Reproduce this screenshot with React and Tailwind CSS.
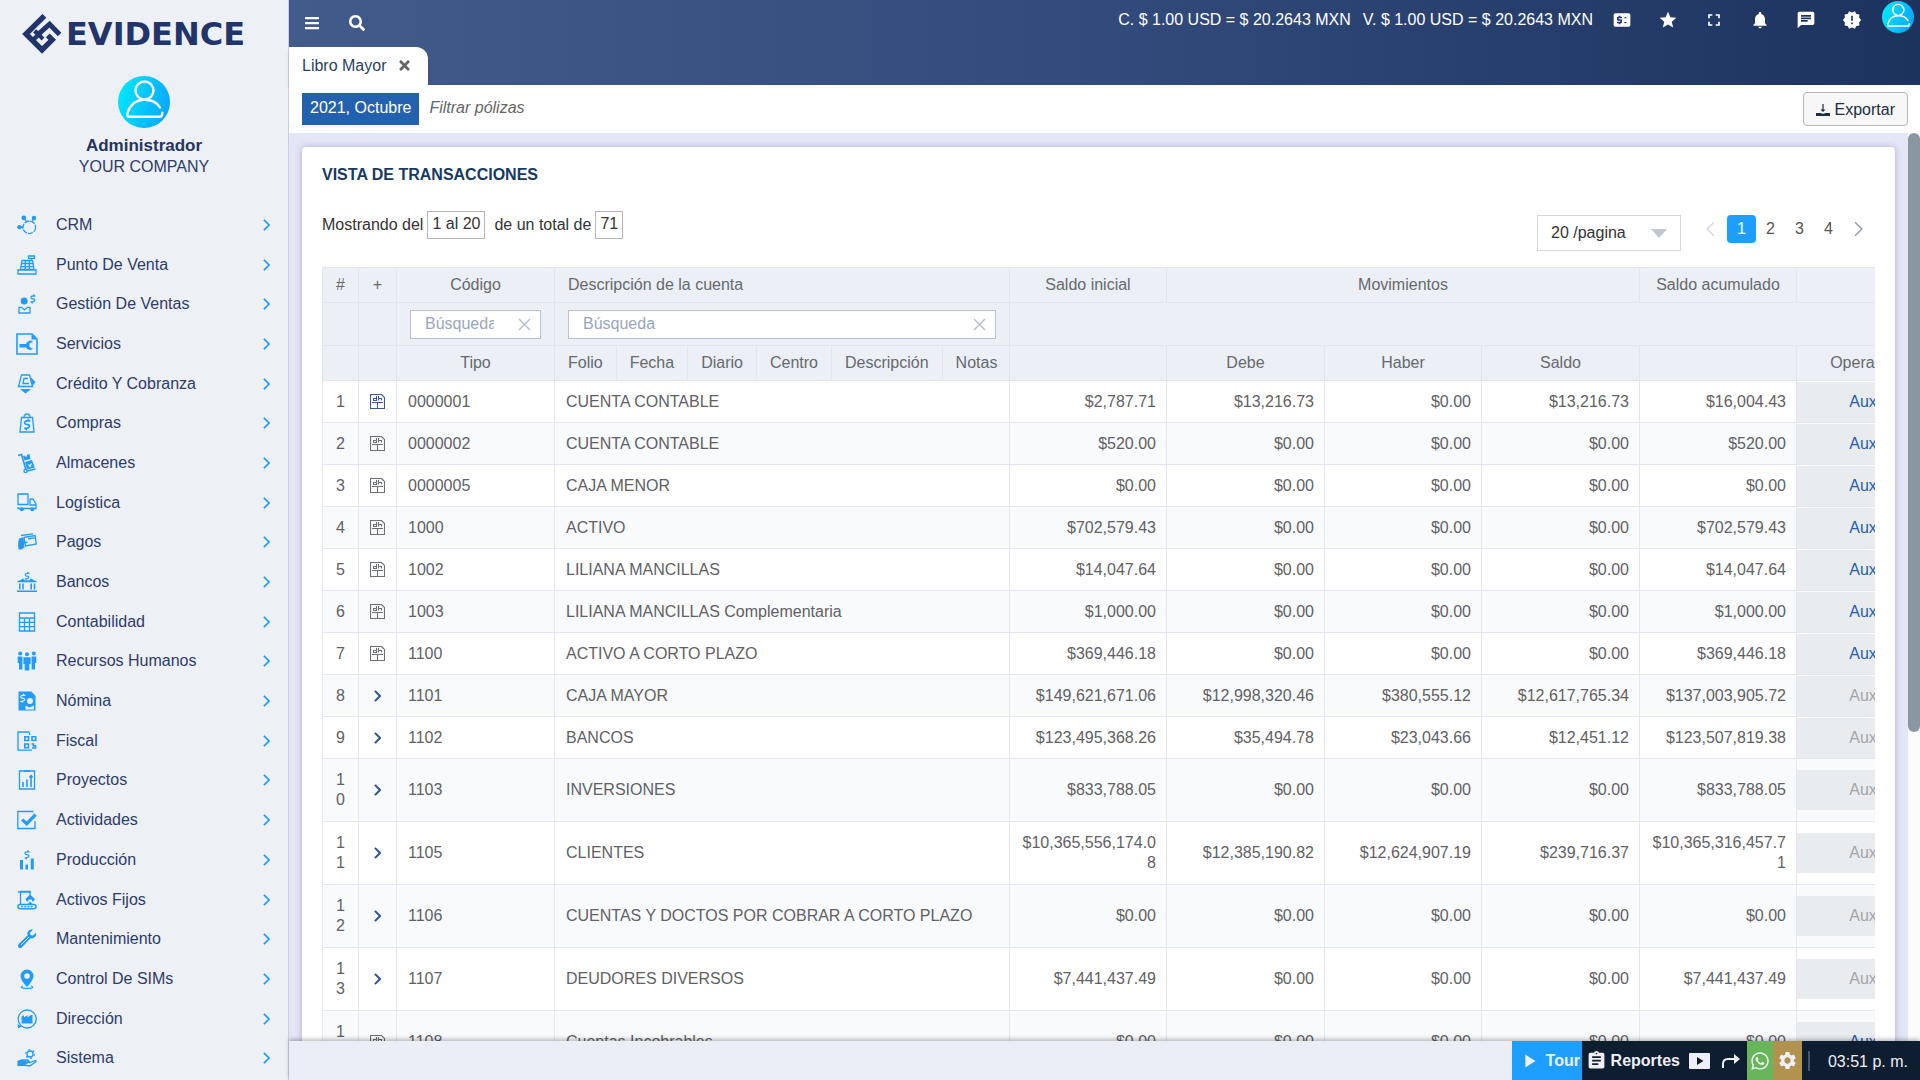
import React from "react";
import { FaBars, FaSearch, FaTimes, FaWhatsapp } from "react-icons/fa";
import {
  MdAssignment,
  MdChat,
  MdFullscreen,
  MdNewReleases,
  MdNotifications,
  MdPlayArrow,
  MdPriceChange,
  MdSettings,
  MdStar,
} from "react-icons/md";

const S = { fill: "none", stroke: "currentColor", strokeWidth: 1.3 };

const DOLLAR = "M3 -2H0.5Q-2 -2 -1.5 0Q-1 1 1 1Q3 1.5 2 3Q1.5 4 -1 4H-2M1.5 -3.5L1 -2M0 4L-0.5 5.5";

const menu = [
  {
    label: "CRM",
    icon: (
      <>
        <circle cx="12.3" cy="12.3" r="6.3" {...S} strokeDasharray="5 1" />
        <circle cx="6.8" cy="2.8" r="2.4" />
        <circle cx="17" cy="3" r="2.2" />
        <circle cx="2.4" cy="12.2" r="2.1" />
        <path d="M7 3L9.5 7M17 3L15 7M2 12H6" {...S} />
      </>
    ),
  },
  {
    label: "Punto De Venta",
    icon: (
      <>
        <path d="M11.5 1H17.5V3.3H11.5ZM14.5 3.5V5M5 5.5H15.5L17 14.5H3.5ZM1 15H19V19H1Z" {...S} />
        <path d="M4 8.5H16.5M3.8 11.7H17M8.3 5V15M12.3 5V15" {...S} />
      </>
    ),
  },
  {
    label: "Gestión De Ventas",
    icon: (
      <>
        <circle cx="7.2" cy="7" r="3.5" />
        <path d="M2 19V13.3H4.5L7.5 16L10.5 13.3H13V19Z" {...S} />
        <path d={DOLLAR} transform="translate(15.5 4)" {...S} />
      </>
    ),
  },
  {
    label: "Servicios",
    icon: (
      <>
        <path d="M0 0H15L20 5V20H0Z" {...S} strokeWidth="1.6" />
        <path d="M14.5 0V5.5H20Z" />
        <path d="M2.5 10H9A4.5 4.5 0 0 1 16 7.5L12.5 9.5V13L16 14.8A4.5 4.5 0 0 1 9 13.5H2.5Z" />
      </>
    ),
  },
  {
    label: "Crédito Y Cobranza",
    icon: (
      <>
        <path d="M4.5 1H12.5L15.5 12.5H1.5Z" {...S} />
        <path d="M11 4.5H7L6 9.5H12" {...S} />
        <path d="M13.5 3L18.5 8L15.5 12ZM3 15H14L8.5 19.5Z" />
      </>
    ),
  },
  {
    label: "Compras",
    icon: (
      <>
        <path d="M4.5 4.5H15.5L17 19H3ZM7 4.5Q7 1 10 1Q13 1 13 4.5" {...S} />
        <path d={DOLLAR} transform="translate(9.6 10.4) scale(1.25)" {...S} />
      </>
    ),
  },
  {
    label: "Almacenes",
    icon: (
      <>
        <path d="M1 2.5L4.5 1.5L9 17M10 18L18.5 16" {...S} strokeWidth="1.6" />
        <circle cx="8.5" cy="18" r="1.6" {...S} />
        <path d="M6 3L8 2.5L9 4.5L10.5 1.5L12.5 1L13.5 6L7.5 7.5ZM8 9L15 7L17.8 14.5L10 16.5Z" />
        <path d="M11.5 11.5L13 13.5L14.5 10.5" fill="none" stroke="#edf0f5" strokeWidth="1.3" />
      </>
    ),
  },
  {
    label: "Logística",
    icon: (
      <>
        <path d="M1 1H11V11.5H1ZM13 6H16L19 11V15.5H1V14M13 6V12H19" {...S} />
        <circle cx="4.8" cy="16.3" r="2" />
        <circle cx="15.3" cy="16.3" r="2" />
      </>
    ),
  },
  {
    label: "Pagos",
    icon: (
      <>
        <path d="M7 5.5L18 3.5L19.3 12L8.5 14ZM4 3.5L16 1.8M11 7L17.5 5.8" {...S} />
        <path d="M2 7Q3 5 6.5 5.5L7 10L10.5 9.5V11L7 11.5L7.5 15.5Q5 17 4.5 17.5H1.5Q0.5 11 2 7Z" />
      </>
    ),
  },
  {
    label: "Bancos",
    icon: (
      <>
        <path d="M0 19.2H20M0.5 9.5H19.5" {...S} strokeWidth="1.6" />
        <path d="M1 9.5L6 6.5L8 8.5H12L14 6.5L19 9.5Z" />
        <path d="M2.8 11.5V17.5M6 11.5V17.5M14.2 11.5V17.5M17.5 11.5V17.5" {...S} strokeWidth="1.6" />
        <path d={DOLLAR} transform="translate(9.7 3.2) scale(0.9)" {...S} />
      </>
    ),
  },
  {
    label: "Contabilidad",
    icon: <path d="M2.5 1H17.5V19H2.5ZM2.5 6H17.5M2.5 10.3H17.5M2.5 14.6H17.5M7.5 6V19M12.5 6V19" {...S} />,
  },
  {
    label: "Recursos Humanos",
    icon: (
      <>
        <circle cx="3.2" cy="2.6" r="2" />
        <circle cx="10" cy="3.3" r="2" />
        <circle cx="16.8" cy="2.6" r="2" />
        <path d="M0.7 5.5H5.4V18.5H2V12H0.7ZM14.6 5.5H19.3V12H18V18.5H14.6ZM6.4 6.2H13.6V13H12.3V19.5H7.7V13H6.4Z" />
      </>
    ),
  },
  {
    label: "Nómina",
    icon: (
      <>
        <path d="M1.5 0.5H14.5L18.5 5V19.5H1.5Z" />
        <circle cx="13" cy="10" r="3" fill="#edf0f5" />
        <path d="M8.5 18.5V14.5L12.5 16.5L17 14.5V18.5Z" fill="#edf0f5" />
        <path d={DOLLAR} transform="translate(5.3 6.3)" fill="none" stroke="#edf0f5" strokeWidth="1.2" />
      </>
    ),
  },
  {
    label: "Fiscal",
    icon: (
      <>
        <path d="M12.5 1.5V4M12.5 1H1V19.2H15" {...S} />
        <path d="M7.8 5.8H11.5V9.5H7.8ZM15 5.8H18.7V9.5H15ZM7.8 13H11.5V16.7H7.8ZM14.5 13H16.5V15H19M15 17H18.5V14" {...S} strokeWidth="1.6" />
      </>
    ),
  },
  {
    label: "Proyectos",
    icon: (
      <>
        <path d="M2.5 1H17.5V19H2.5Z" {...S} />
        <path d="M7 1H13M6 17V12M10 17V9.5M14 17V6M12.5 7.5L14 5.5L15.5 7.5" {...S} strokeWidth="1.6" />
      </>
    ),
  },
  {
    label: "Actividades",
    icon: (
      <>
        <path d="M16.5 1.5H0.8V18.5H18V11" {...S} />
        <path d="M4 10.5L6.5 8.5L9.5 11.5L17.5 3.5L19.8 5.8L9.8 16Z" />
      </>
    ),
  },
  {
    label: "Producción",
    icon: (
      <>
        <path d="M3 10H6V19.5H3ZM8.5 14.5H11V19.5H8.5ZM13.8 8.5H16.8V19.5H13.8Z" />
        <path d={DOLLAR} transform="translate(9.6 3.8)" {...S} />
      </>
    ),
  },
  {
    label: "Activos Fijos",
    icon: (
      <>
        <path d="M3.5 14V1.5H13V5M1 2H14" {...S} />
        <path d="M13 4.5L18 9L16 12L14.5 9.5H12L10 12L8.5 9Z" />
        <rect x="1" y="14.5" width="18" height="4.2" rx="2.1" {...S} strokeWidth="1.6" />
        <path d="M4 16.6H16.5" {...S} strokeDasharray="2 1.2" />
        <path d="M11 14L13 11.5L15.5 14Z" />
      </>
    ),
  },
  {
    label: "Mantenimiento",
    icon: (
      <>
        <path d="M19 3.5L16 6.5L13.5 6L13 3.8L16 0.8Q12.5 0 10.8 2.8Q10 4.5 10.5 6.5L1.5 15.3Q0.2 17 1.6 18.5Q3.2 19.8 4.8 18.5L13.5 9.3Q16 9.8 18 8Q19.8 6 19 3.5Z" />
        <path d="M4 16L12 8" fill="none" stroke="#edf0f5" strokeWidth="0.9" />
      </>
    ),
  },
  {
    label: "Control De SIMs",
    icon: (
      <>
        <path d="M10 0.5A6.5 6.5 0 0 1 16.5 7Q16.5 11 10 18Q3.5 11 3.5 7A6.5 6.5 0 0 1 10 0.5ZM10 4.2A2.8 2.8 0 1 0 10 9.8A2.8 2.8 0 1 0 10 4.2Z" fillRule="evenodd" />
        <path d="M6 17Q3.5 18 5 18.8Q10 20 15 18.8Q16.5 18 14 17" {...S} />
      </>
    ),
  },
  {
    label: "Dirección",
    icon: (
      <>
        <circle cx="10.2" cy="10" r="9" {...S} />
        <path d="M4.5 14.5V7.5L7 6V8.5L10.5 6V8.5L14 6H15.5V14.5Z" />
        <path d="M0.5 15L4.5 17.5L1 19.5Z" />
      </>
    ),
  },
  {
    label: "Sistema",
    icon: (
      <>
        <circle cx="13" cy="6" r="3" {...S} />
        <circle cx="13" cy="6" r="4.3" {...S} strokeDasharray="1.8 2.7" />
        <path d="M0.5 13.5L5 12H10.5L12.5 13.8H8M12 15L18.5 12.5Q19.8 13 18 14.5L12.5 18L6 17L0.5 17.5" {...S} />
        <path d="M0.5 13L6 12L12 14.5L8 17L0.5 17.5Z" />
      </>
    ),
  },
];

const rows = [
  ["0000001", "CUENTA CONTABLE", "$2,787.71", "$13,216.73", "$0.00", "$13,216.73", "$16,004.43", true],
  ["0000002", "CUENTA CONTABLE", "$520.00", "$0.00", "$0.00", "$0.00", "$520.00", true],
  ["0000005", "CAJA MENOR", "$0.00", "$0.00", "$0.00", "$0.00", "$0.00", true],
  ["1000", "ACTIVO", "$702,579.43", "$0.00", "$0.00", "$0.00", "$702,579.43", true],
  ["1002", "LILIANA MANCILLAS", "$14,047.64", "$0.00", "$0.00", "$0.00", "$14,047.64", true],
  ["1003", "LILIANA MANCILLAS Complementaria", "$1,000.00", "$0.00", "$0.00", "$0.00", "$1,000.00", true],
  ["1100", "ACTIVO A CORTO PLAZO", "$369,446.18", "$0.00", "$0.00", "$0.00", "$369,446.18", true],
  ["1101", "CAJA MAYOR", "$149,621,671.06", "$12,998,320.46", "$380,555.12", "$12,617,765.34", "$137,003,905.72", false],
  ["1102", "BANCOS", "$123,495,368.26", "$35,494.78", "$23,043.66", "$12,451.12", "$123,507,819.38", false],
  ["1103", "INVERSIONES", "$833,788.05", "$0.00", "$0.00", "$0.00", "$833,788.05", false],
  ["1105", "CLIENTES", "$10,365,556,174.08", "$12,385,190.82", "$12,624,907.19", "$239,716.37", "$10,365,316,457.71", false],
  ["1106", "CUENTAS Y DOCTOS POR COBRAR A CORTO PLAZO", "$0.00", "$0.00", "$0.00", "$0.00", "$0.00", false],
  ["1107", "DEUDORES DIVERSOS", "$7,441,437.49", "$0.00", "$0.00", "$0.00", "$7,441,437.49", false],
  ["1108", "Cuentas Incobrables", "$0.00", "$0.00", "$0.00", "$0.00", "$0.00", true],
];

const subHeaders = ["Folio", "Fecha", "Diario", "Centro", "Descripción", "Notas"];

const topActions = [
  { label: "Tipo de cambio", Icon: MdPriceChange },
  { label: "Favoritos", Icon: MdStar },
  { label: "Pantalla completa", Icon: MdFullscreen },
  { label: "Notificaciones", Icon: MdNotifications },
  { label: "Mensajes", Icon: MdChat },
  { label: "Novedades", Icon: MdNewReleases },
];

function Avatar({ className }) {
  return (
    <svg viewBox="0 0 52 52" className={className} aria-hidden="true">
      <defs>
        <linearGradient id="avatarFill" x1="0" x2="1" y1="0.3" y2="0.6">
          <stop offset="0" stopColor="#00e8fb" />
          <stop offset="1" stopColor="#0aa6ff" />
        </linearGradient>
      </defs>
      <circle cx="26" cy="26" r="26" fill="url(#avatarFill)" />
      <g fill="none" stroke="#fff" strokeWidth="2.4" strokeLinecap="round">
        <circle cx="26.5" cy="14.5" r="9" />
        <path d="M42 31.5C39 26.5 33 23.8 26.5 23.8C17.5 23.8 11 29.5 9.3 38.5Q9 40.8 11.3 40.8H41.5Q44.5 40.8 44.2 36.8" />
      </g>
    </svg>
  );
}

function LogoMark() {
  return (
    <svg viewBox="0 0 40 40" className="h-10 w-10 shrink-0" aria-hidden="true">
      <g fill="none" stroke="#22356b" strokeWidth="5.4">
        <path d="M22.4 1.8L4 20L20 36L30.2 25.8L25.8 21.4" />
        <path d="M10.5 26.5L16.6 20.6L12.6 16.8" strokeWidth="4.4" />
        <path d="M17 19.6L27.6 10.2L37.6 20.4" strokeWidth="5" />
        <path d="M16.4 20.4L21 25" strokeWidth="4" />
      </g>
    </svg>
  );
}

function LedgerIcon() {
  return (
    <svg viewBox="0 0 15 15" className="mx-auto h-[15px] w-[15px]" aria-hidden="true">
      <g fill="none" stroke="currentColor" strokeWidth="1.1">
        <path d="M0.5 0.5H11.5L14.5 3.5V14.5H0.5ZM2 8.5H13M7.5 8.5V14" />
        <path d="M6.5 2V6.5H3.5V4.5H6.5M8.5 2V6.5M8.5 4.5H11.5V6.5" />
      </g>
    </svg>
  );
}

function Chevron({ className, width = 2, left = false }) {
  return (
    <svg viewBox="0 0 8 14" className={className} aria-hidden="true">
      <path d={left ? "M7 1L1 7L7 13" : "M1 1L7 7L1 13"} fill="none" stroke="currentColor" strokeWidth={width} />
    </svg>
  );
}

function Sidebar() {
  return (
    <aside className="flex w-[289px] shrink-0 flex-col border-r border-[#c9cfe0] bg-[#edf0f5] text-[#2d3c6b]">
      <div className="flex items-center gap-1 pt-[14px] pl-[22px]">
        <LogoMark />
        <span className="text-[32px] leading-10 font-bold text-[#22356b] font-['DejaVu_Sans',sans-serif]">EVIDENCE</span>
      </div>
      <div className="flex flex-col items-center pt-[22px]">
        <Avatar className="h-[52px] w-[52px]" />
        <strong className="mt-[7px] text-[17px] leading-[22px] text-[#24345f]">Administrador</strong>
        <span className="leading-5">YOUR COMPANY</span>
      </div>
      <nav className="mt-[28px] flex min-h-0 flex-1 flex-col pb-[2px]">
        {menu.map((item) => (
          <a key={item.label} href="#" className="flex flex-1 items-center pr-[18px] pl-[17px]">
            <svg viewBox="0 0 20 20" className="h-5 w-5 overflow-visible text-[#229bfb]" fill="currentColor" aria-hidden="true">
              {item.icon}
            </svg>
            <span className="ml-[19px] flex-1">{item.label}</span>
            <Chevron className="h-3 w-[7px] text-[#229bfb]" />
          </a>
        ))}
      </nav>
    </aside>
  );
}

function TopBar() {
  return (
    <header className="flex h-[85px] shrink-0 flex-col justify-between bg-gradient-to-r from-[#435b8b] via-[#324b7c] to-[#1d335e] text-white">
      <div className="flex h-[38px] items-center pl-[15px]">
        <button aria-label="Menú" className="pt-2">
          <FaBars size={16} />
        </button>
        <button aria-label="Buscar" className="ml-[29px] pt-2">
          <FaSearch size={16} />
        </button>
        <div className="ml-auto flex items-center pr-[6px]">
          <span className="pt-[2px]">C. $ 1.00 USD = $ 20.2643 MXN</span>
          <span className="ml-3 pt-[2px]">V. $ 1.00 USD = $ 20.2643 MXN</span>
          <div className="ml-[19px] flex gap-[26px] pt-[2px]">
            {topActions.map(({ label, Icon }) => (
              <button key={label} aria-label={label}>
                <Icon size={20} />
              </button>
            ))}
          </div>
          <button aria-label="Perfil" className="ml-5 pb-1">
            <Avatar className="h-8 w-8" />
          </button>
        </div>
      </div>
      <div className="flex">
        <div className="flex h-[38px] items-center rounded-tr-xl bg-white pr-4 pl-[13px] text-[#2a3f5f] shadow-md">
          <span>Libro Mayor</span>
          <button aria-label="Cerrar pestaña" className="ml-[11px] pb-[2px] text-[#666]">
            <FaTimes size={15} />
          </button>
        </div>
      </div>
    </header>
  );
}

function Toolbar() {
  return (
    <div className="flex h-12 shrink-0 items-center bg-white pr-3 pl-[13px]">
      <button className="h-8 bg-[#2361af] px-2 pb-[2px] text-white">2021, Octubre</button>
      <input
        aria-label="Filtrar pólizas"
        placeholder="Filtrar pólizas"
        className="ml-[10px] w-64 pb-[2px] italic outline-none placeholder:text-[#666]"
      />
      <button className="ml-auto flex h-[34px] items-center gap-[5px] rounded border border-[#b5b5b5] bg-[#f7f7f7] px-3 pt-[2px] text-[#1f2d3d]">
        <svg viewBox="0 0 14 12" className="h-3 w-[14px]" fill="currentColor" aria-hidden="true">
          <path d="M6.4 0H7.6V5.5H9.5L7 8L4.5 5.5H6.4Z" />
          <path d="M0 9H4.5Q7 10.5 9.5 9H14V12H0Z" />
        </svg>
        Exportar
      </button>
    </div>
  );
}

function SearchBox({ label }) {
  return (
    <div className="mx-[13px] flex h-[29px] items-center border border-[#bcc2cc] bg-white pr-[9px] pl-[14px]">
      <input aria-label={label} placeholder="Búsqueda" className="w-0 flex-1 outline-none placeholder:text-[#9aa5bd]" />
      <button aria-label="Limpiar" className="ml-6 text-[#b4bccb]">
        <svg viewBox="0 0 13 13" className="h-[13px] w-[13px]" aria-hidden="true">
          <path d="M1 1L12 12M12 1L1 12" fill="none" stroke="currentColor" strokeWidth="1.4" />
        </svg>
      </button>
    </div>
  );
}

function Pagination() {
  return (
    <div className="flex items-start">
      <div className="relative mr-4 h-9 w-36">
        <select aria-label="Registros por página" className="h-full w-full appearance-none border border-[#d5d9de] bg-white pl-[13px] text-[#333]">
          <option>20 /pagina</option>
        </select>
        <svg viewBox="0 0 16 9" className="pointer-events-none absolute top-[14px] right-[14px] h-[9px] w-4" aria-hidden="true">
          <path d="M0 0H16L8 9Z" fill="#c0c7d2" />
        </svg>
      </div>
      <button aria-label="Anterior" className="flex h-7 w-[30px] items-center pl-[9px] text-[#d3d7de]">
        <Chevron className="h-4 w-[9px]" width={1.3} left />
      </button>
      {[1, 2, 3, 4].map((page) => (
        <button
          key={page}
          className={page === 1 ? "h-7 w-[29px] rounded-sm bg-[#1e9fff] text-white" : "h-7 w-[29px] text-[#555]"}
        >
          {page}
        </button>
      ))}
      <button aria-label="Siguiente" className="flex h-7 w-[30px] items-center justify-center text-[#8f9bb3]">
        <Chevron className="h-4 w-[9px]" width={1.3} />
      </button>
    </div>
  );
}

const th = "border border-[#e1e5ee] font-normal";
const td = "border border-[#e4e6f2] break-all";

function AccountsTable() {
  return (
    <div className="mt-4 mr-5 ml-5 overflow-hidden">
      <table className="w-[calc(100%+80px)] table-fixed border-collapse text-[#5f6164]">
        <colgroup>
          <col className="w-9" />
          <col className="w-[38px]" />
          <col className="w-[158px]" />
          <col />
          <col className="w-[157px]" />
          <col className="w-[158px]" />
          <col className="w-[157px]" />
          <col className="w-[158px]" />
          <col className="w-[157px]" />
          <col className="w-[158px]" />
        </colgroup>
        <thead className="bg-[#ecf0f6] text-[#66696e]">
          <tr className="h-[35px]">
            <th className={th}>#</th>
            <th className={th}>+</th>
            <th className={th}>Código</th>
            <th className={`${th} px-[13px] text-left`}>Descripción de la cuenta</th>
            <th className={th}>Saldo inicial</th>
            <th className={th} colSpan={3}>Movimientos</th>
            <th className={th}>Saldo acumulado</th>
            <th className={th}></th>
          </tr>
          <tr className="h-[43px]">
            <td className={th}></td>
            <td className={th}></td>
            <td className={th}>
              <SearchBox label="Buscar código" />
            </td>
            <td className={th}>
              <SearchBox label="Buscar descripción" />
            </td>
            <td className={th} colSpan={6}></td>
          </tr>
          <tr className="h-[35px]">
            <th className={th}></th>
            <th className={th}></th>
            <th className={th}>Tipo</th>
            <th className={th}>
              <div className="flex">
                {subHeaders.map((name) => (
                  <span key={name} className="border-r border-[#e1e5ee] px-[13px] leading-8 last:border-r-0">
                    {name}
                  </span>
                ))}
              </div>
            </th>
            <th className={th}></th>
            <th className={th}>Debe</th>
            <th className={th}>Haber</th>
            <th className={th}>Saldo</th>
            <th className={th}></th>
            <th className={th}>Operaciones</th>
          </tr>
        </thead>
        <tbody>
          {rows.map(([code, name, initial, debit, credit, balance, total, leaf], i) => (
            <tr key={code} className={`${i < 9 ? "h-[42px]" : "h-[63px]"} leading-5 even:bg-[#f9fafc]`}>
              <td className={`${td} px-3 text-center`}>{i + 1}</td>
              <td className="border border-[#e4e6f2] text-center">
                {leaf ? (
                  <span className={i === 0 ? "text-[#3c5a92]" : "text-[#6c6f73]"}>
                    <LedgerIcon />
                  </span>
                ) : (
                  <button aria-label={`Expandir ${code}`} className="block w-full text-[#2b5591]">
                    <Chevron className="mx-auto h-3 w-[7px]" width={2.4} />
                  </button>
                )}
              </td>
              <td className={`${td} px-[11px]`}>{code}</td>
              <td className={`${td} px-[11px]`}>{name}</td>
              {[initial, debit, credit, balance, total].map((amount, n) => (
                <td key={n} className={`${td} pr-[10px] pl-2 text-right`}>{amount}</td>
              ))}
              <td className="border border-[#e4e6f2] p-0">
                <button
                  disabled={!leaf}
                  className="block h-10 w-full bg-[#e9ecef] text-[#2460ae] disabled:text-[#a3a5a8]"
                >
                  Auxiliar
                </button>
              </td>
            </tr>
          ))}
        </tbody>
      </table>
    </div>
  );
}

function FooterBar() {
  return (
    <footer className="relative flex h-[39px] shrink-0 bg-[#ebeef6] text-[#edf0f7] shadow-[0_-2px_4px_rgba(0,0,0,0.25)]">
      <div className="ml-auto flex">
        <button className="flex w-[70px] items-center gap-[6px] bg-[#1e9fff] pl-[6px] font-bold">
          <MdPlayArrow size={22} />
          Tour
        </button>
        <div className="flex items-center bg-[#0f1d31]">
          <button className="flex items-center gap-1 px-1 font-bold">
            <MdAssignment size={21} />
            Reportes
          </button>
          <button aria-label="Videos" className="ml-[5px]">
            <svg viewBox="0 0 21 16" className="h-4 w-[21px]" fill="currentColor" aria-hidden="true">
              <path fillRule="evenodd" d="M1 0H20Q21 0 21 1V15Q21 16 20 16H1Q0 16 0 15V1Q0 0 1 0ZM8 4V12L14.5 8Z" />
            </svg>
          </button>
          <button aria-label="Compartir" className="mr-[7px] ml-3">
            <svg viewBox="0 0 18 14" className="h-[14px] w-[18px]" aria-hidden="true">
              <path d="M1 14V10Q1 5 6 5H13" fill="none" stroke="currentColor" strokeWidth="2" />
              <path d="M12 0L18 5L12 10Z" fill="currentColor" />
            </svg>
          </button>
          <button aria-label="WhatsApp" className="flex h-full w-[26px] items-center justify-center bg-[#69b65a]">
            <FaWhatsapp size={20} />
          </button>
          <button aria-label="Configuración" className="flex h-full w-[29px] items-center justify-center bg-[#b2924f]">
            <MdSettings size={21} />
          </button>
          <span className="ml-[6px] h-5 border-l-2 border-[#46536a]" />
          <time className="pt-[2px] pr-3 pl-[18px]">03:51 p. m.</time>
        </div>
      </div>
    </footer>
  );
}

export default function App() {
  return (
    <div className="flex h-screen overflow-hidden text-base font-['Liberation_Sans',Arial,sans-serif]">
      <Sidebar />
      <div className="flex min-w-0 flex-1 flex-col">
        <TopBar />
        <Toolbar />
        <main className="flex min-h-0 flex-1 bg-[#e2e6f6]">
          <div className="min-w-0 flex-1 overflow-hidden px-[13px] pt-[14px]">
            <section className="rounded bg-white pt-4 shadow-[0_0_6px_rgba(80,80,130,0.35)]">
              <h1 className="px-5 leading-6 font-bold text-[#173a63]">VISTA DE TRANSACCIONES</h1>
              <div className="mt-6 flex items-start justify-between pr-[22px] pl-5 text-[#333]">
                <p className="flex items-center">
                  Mostrando del
                  <span className="mr-[9px] ml-1 border border-[#b5b5b5] px-1 pb-[2px] leading-6">1 al 20</span>
                  de un total de
                  <span className="ml-1 border border-[#b5b5b5] px-1 pb-[2px] leading-6">71</span>
                </p>
                <div className="pt-1">
                  <Pagination />
                </div>
              </div>
              <AccountsTable />
            </section>
          </div>
          <div className="w-3 bg-[#fbfcfc]">
            <div className="h-[66%] rounded-full bg-[#8a97a2]" />
          </div>
        </main>
        <FooterBar />
      </div>
    </div>
  );
}
